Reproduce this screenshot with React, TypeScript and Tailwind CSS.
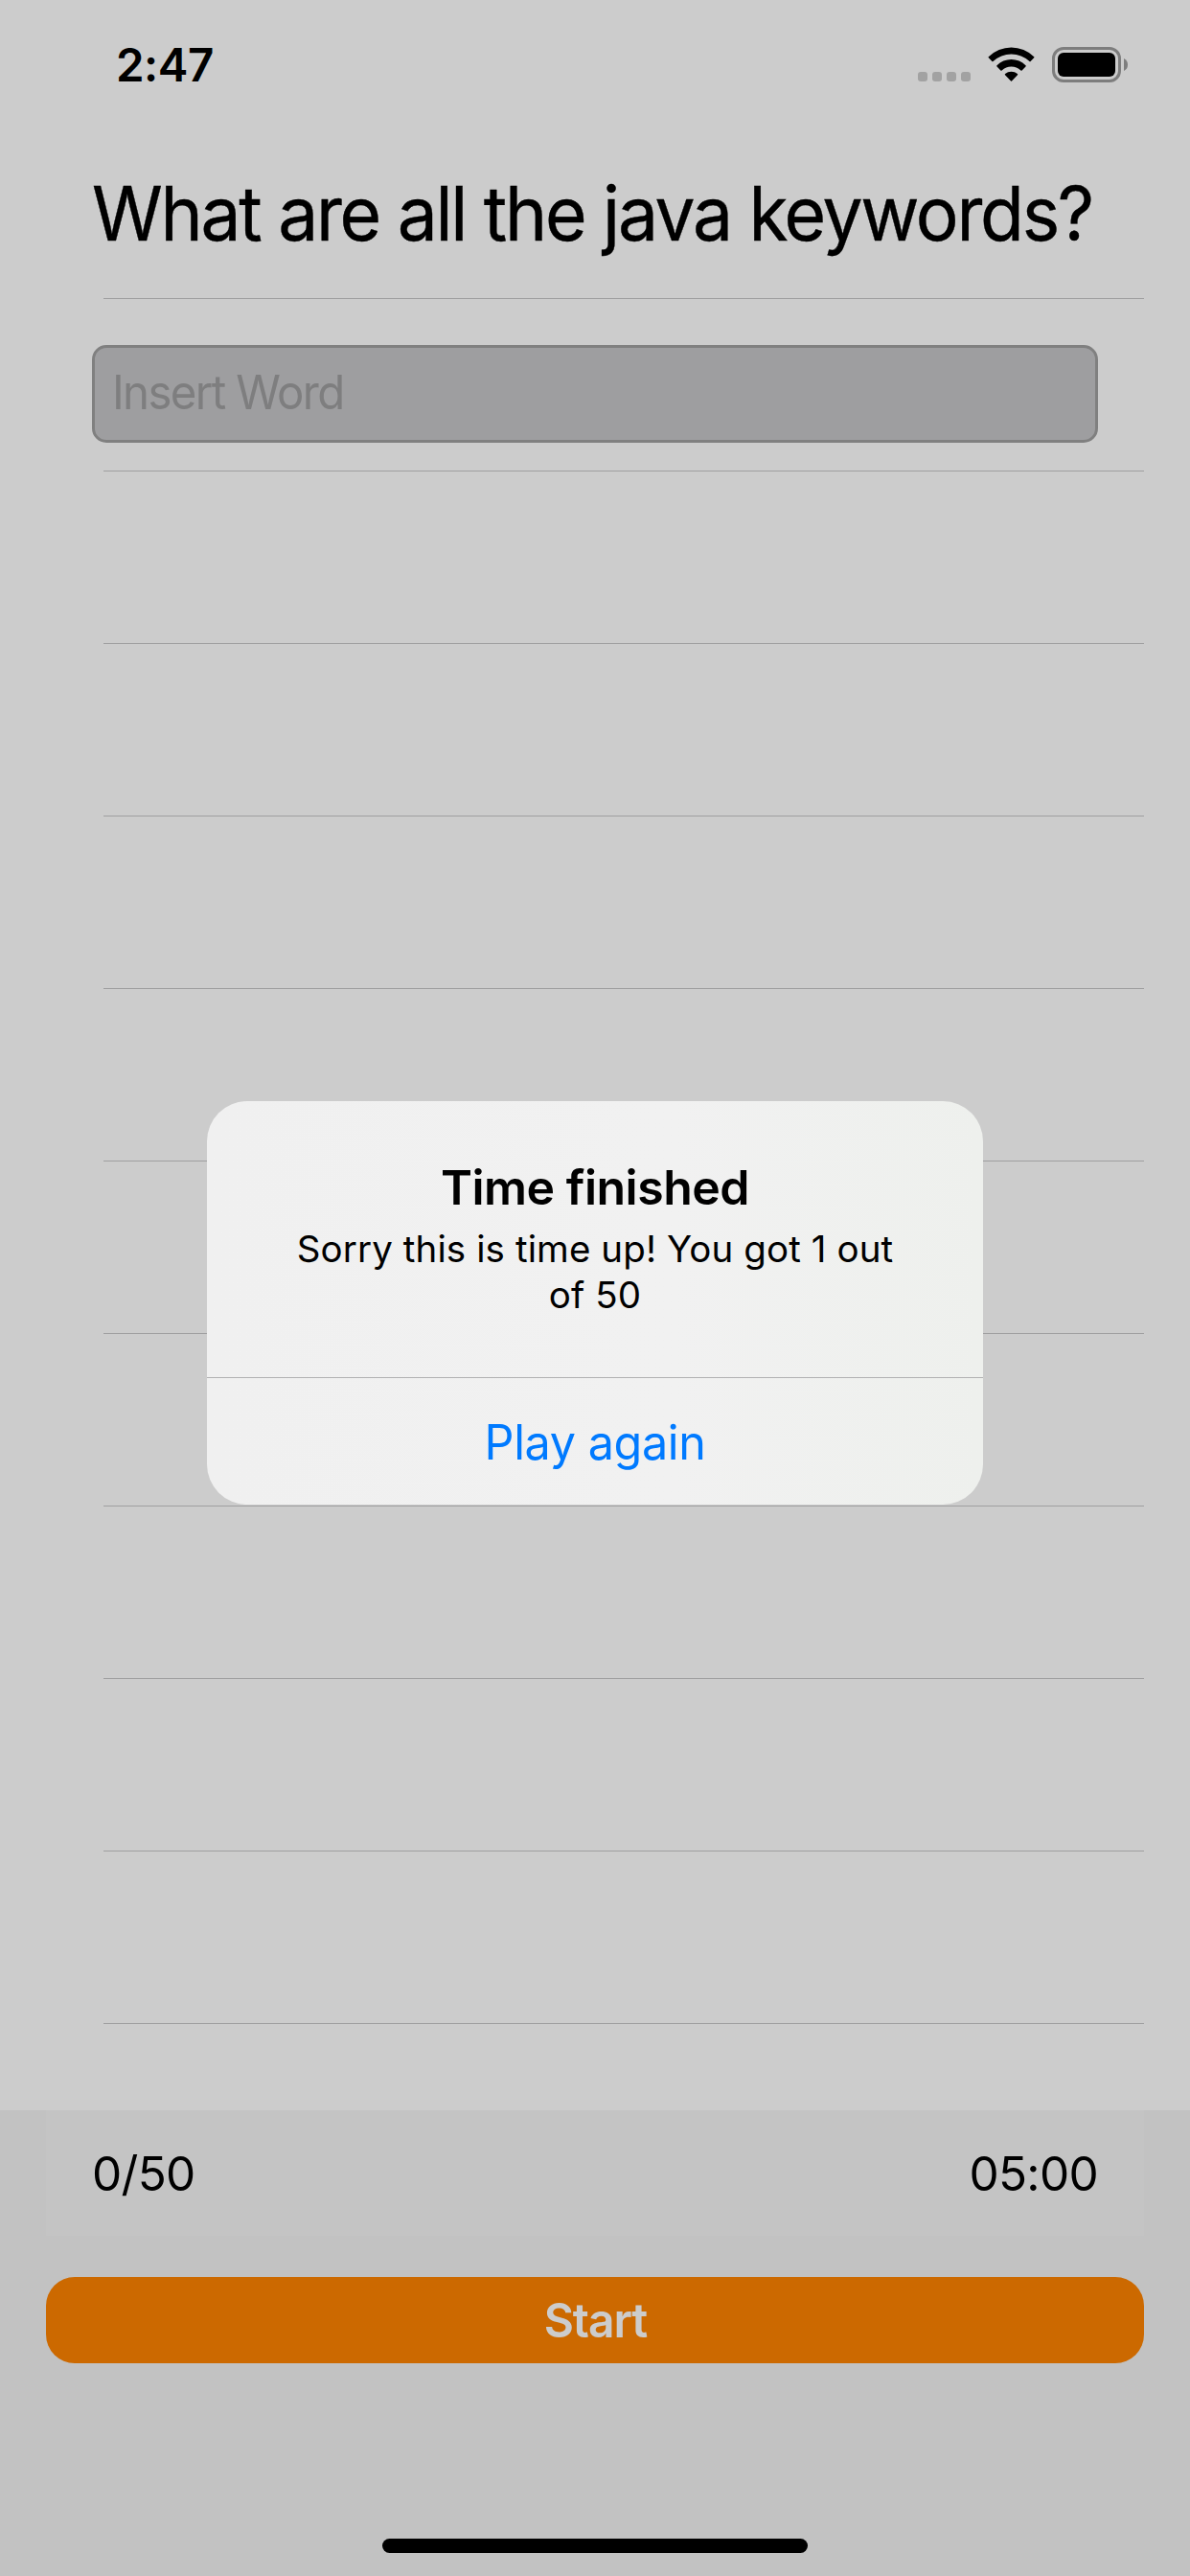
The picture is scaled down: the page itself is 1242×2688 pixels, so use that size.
const EMPTY_ROWS = 9;

function StatusBar() {
  return (
    <header className="flex h-[132px] shrink-0 items-start justify-between pl-[121px] pr-[65px]">
      <span className="mt-[38px] text-[47.5px] font-semibold leading-[60px] tracking-[-0.01em]">2:47</span>
      <div className="mt-[49px] flex items-start">
        <div className="mt-[26px] flex gap-[5px]">
          {[0, 1, 2, 3].map((dot) => (
            <span key={dot} className="size-[10px] rounded-[3px] bg-[#a2a2a2]" />
          ))}
        </div>
        <svg className="ml-[18px] h-[37px] w-[49px]" viewBox="0 0 49 37" fill="#000">
          <path d="M0.8 10.2A33.6 33.6 0 0 1 48.2 10.2Q48.8 10.7 48.2 11.3L44.6 15Q44.1 15.5 43.5 15A28 28 0 0 0 5.5 15Q4.9 15.5 4.4 15L0.8 11.3Q0.2 10.7 0.8 10.2Z" />
          <path d="M9.5 19.2A21.2 21.2 0 0 1 39.5 19.2Q40.1 19.8 39.5 20.4L35.6 24.4Q35 24.9 34.4 24.4A14.8 14.8 0 0 0 14.6 24.4Q14 24.9 13.4 24.4L9.5 20.4Q8.9 19.8 9.5 19.2Z" />
          <path d="M18.1 28.1A9.6 9.6 0 0 1 30.9 28.1Q31.6 28.7 31 29.3L25 35.6Q24.5 36.1 24 35.6L18 29.3Q17.4 28.7 18.1 28.1Z" />
        </svg>
        <div className="ml-[18px] h-[37px] w-[72px] rounded-[12px] border-[3px] border-[#7d7d7d] p-[3px]">
          <div className="h-[25px] w-[60px] rounded-[6px] bg-black" />
        </div>
        <svg className="ml-[3px] mt-[12px] h-[13px] w-[4px]" viewBox="0 0 4 13" fill="#7d7d7d">
          <path d="M0 0Q4 2 4 6.5T0 13Z" />
        </svg>
      </div>
    </header>
  );
}

function Separator() {
  return <div className="ml-[108px] mr-[48px] h-px shrink-0 bg-[#9f9fa0]" />;
}

function ResultAlert() {
  return (
    <div className="absolute inset-0 flex items-center justify-center pt-[31px]">
      <div
        role="alertdialog"
        className="flex h-[421px] w-[810px] flex-col overflow-hidden rounded-[42px] bg-linear-to-r from-[#f0f0f0] via-[#f1f1f1] via-60% to-[#eef0ed] text-center"
      >
        <div className="h-[288px] px-[84px] pt-[60px]">
          <h2 className="text-[50px] font-semibold leading-[60px] tracking-[-0.01em]">Time finished</h2>
          <p className="mt-[10px] whitespace-nowrap text-[38.5px] leading-[48px] tracking-[0.1px]">
            Sorry this is time up! You got 1 out
            <br />
            of 50
          </p>
        </div>
        <div className="h-px bg-[#b1b1b2]" />
        <button className="flex-1 pt-[2px] text-[50px] leading-[60px] tracking-[-0.4px] text-[#007aff]">
          <span className="inline-block scale-x-[0.97]">Play again</span>
        </button>
      </div>
    </div>
  );
}

export default function App() {
  return (
    <div className="relative flex h-[2688px] w-[1242px] flex-col overflow-hidden bg-[#cccccc] font-['Inter',sans-serif] text-black">
      <StatusBar />
      <main className="flex flex-1 flex-col">
        <div className="flex h-[179px] items-center pl-[96px] pt-[2px]">
          <h1 className="origin-left scale-x-[0.96] whitespace-nowrap text-[78px] leading-[90px] tracking-[-2.4px] [-webkit-text-stroke:0.4px_#000]">
            What are all the java keywords?
          </h1>
        </div>
        <Separator />
        <div className="h-[179px] px-[96px] pt-[48px]">
          <div className="flex h-[102px] items-center rounded-[15px] border-[3px] border-[#808080] bg-[#9e9ea0] pb-[4px] pl-[18px] text-[49.5px] leading-[60px] tracking-[-1.7px] text-[#7e7e7f]">
            <span className="origin-left scale-x-[0.957]">Insert Word</span>
          </div>
        </div>
        <Separator />
        {Array.from({ length: EMPTY_ROWS }, (_, row) => (
          <div key={row}>
            <div className="h-[179px]" />
            <Separator />
          </div>
        ))}
      </main>
      <footer className="flex h-[486px] shrink-0 flex-col items-center bg-[#c2c2c2] px-[48px]">
        <div className="flex h-[131px] w-full items-center justify-between bg-[#c4c4c4] px-[48px] text-[49.5px] leading-[60px] tracking-[-0.7px]">
          <span>0/50</span>
          <span>05:00</span>
        </div>
        <button className="mt-[43px] h-[90px] w-full rounded-[30px] bg-[#cc6900] text-[49.5px] font-semibold leading-[60px] tracking-[-1.1px] text-[#cccccc]">
          <span className="inline-block scale-x-[0.97]">Start</span>
        </button>
        <div className="mt-[183px] h-[15px] w-[444px] rounded-full bg-black" />
      </footer>
      <ResultAlert />
    </div>
  );
}
